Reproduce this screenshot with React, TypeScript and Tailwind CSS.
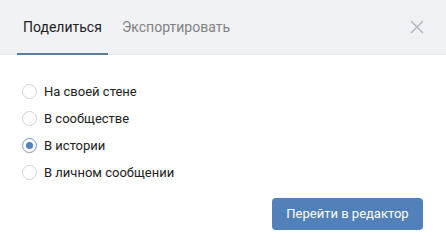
import React, { useState } from "react";

const options = ["На своей стене", "В сообществе", "В истории", "В личном сообщении"];

export default function App() {
  const [sel, setSel] = useState(2);
  return (
    <div className="w-[446px] h-[250px] bg-white flex flex-col" style={{ fontFamily: "Roboto, 'Noto Sans', sans-serif" }}>
      <div className="h-[55px] bg-[#f0f2f5] border-b border-[#e3e6ea] flex items-stretch pl-[17px] pr-[22px]">
        <div className="relative flex items-center px-[6px] text-[14px] text-[#222222]">
          Поделиться
          <div className="absolute left-0 right-0 bottom-[-1px] h-[2px] bg-[#5d7c9e]" />
        </div>
        <div className="flex items-center ml-[8px] px-[6px] text-[14px] text-[#828282]">Экспортировать</div>
        <div className="flex-1" />
        <div className="flex items-center">
          <svg width="14" height="14" viewBox="0 0 14 14">
            <path d="M1.5 1.5 L12.5 12.5 M12.5 1.5 L1.5 12.5" stroke="#b2bac3" strokeWidth="1.6" strokeLinecap="round" />
          </svg>
        </div>
      </div>
      <div className="flex flex-col pt-[23px] pl-[22px]">
        {options.map((o, i) => (
          <div key={o} className="h-[27px] flex items-center cursor-pointer" onClick={() => setSel(i)}>
            <div className={"w-[15px] h-[15px] rounded-full border flex items-center justify-center " + (sel === i ? "border-[#7e98b6]" : "border-[#cdd2d8]")}>
              {sel === i && <div className="w-[7px] h-[7px] rounded-full bg-[#5181b8]" />}
            </div>
            <span className="ml-[7px] text-[13px] text-[#222222]">{o}</span>
          </div>
        ))}
      </div>
      <div className="flex-1" />
      <div className="flex justify-end pr-[23px] pb-[20px]">
        <button className="h-[32px] w-[151px] rounded-[4px] bg-[#5181b8] text-white text-[13px]">Перейти в редактор</button>
      </div>
    </div>
  );
}
